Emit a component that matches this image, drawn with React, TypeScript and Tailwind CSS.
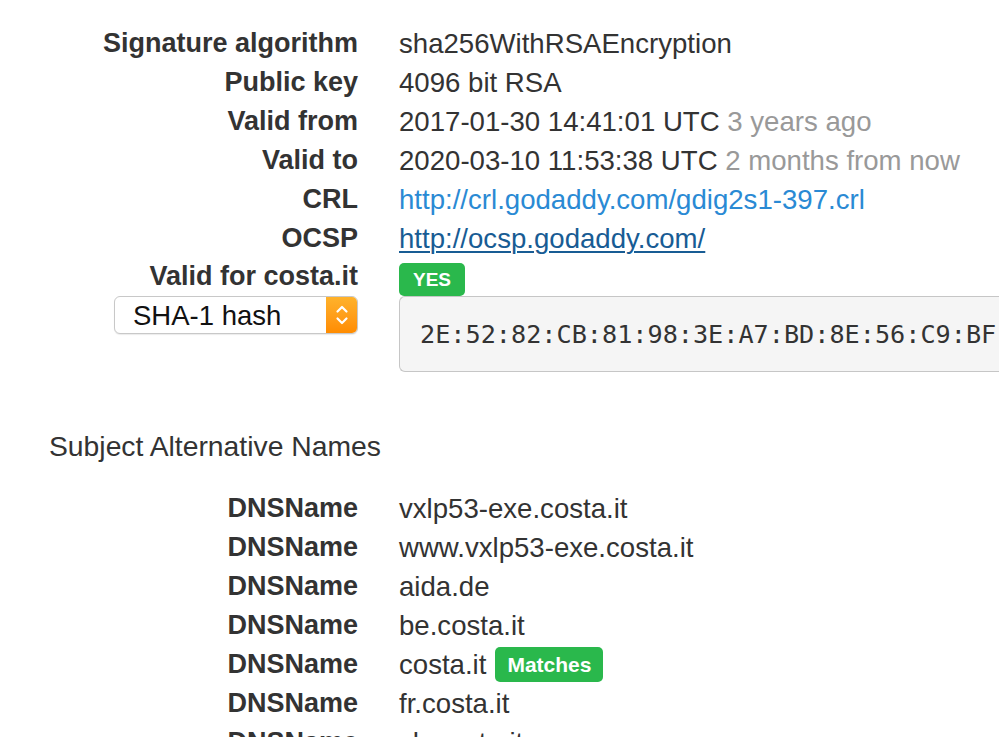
import React from "react";

const Label = ({ children }: { children: React.ReactNode }) => (
  <div className="w-[358px] shrink-0 text-right text-[27px] font-bold text-[#333]">{children}</div>
);

const Row = ({ label, children }: { label: React.ReactNode; children: React.ReactNode }) => (
  <div className="flex h-[39px] items-center">
    <Label>{label}</Label>
    <div className="ml-[41px] whitespace-nowrap text-[27.6px] text-[#333]">{children}</div>
  </div>
);

export default function App() {
  const dns = [
    "vxlp53-exe.costa.it",
    "www.vxlp53-exe.costa.it",
    "aida.de",
    "be.costa.it",
    "costa.it",
    "fr.costa.it",
    "ch.costa.it",
  ];
  return (
    <div
      className="h-[737px] w-[999px] overflow-hidden bg-white text-[27px] leading-[39px]"
      style={{ fontFamily: '"Liberation Sans", Arial, sans-serif' }}
    >
      <div className="pt-[24px]">
        <Row label="Signature algorithm">sha256WithRSAEncryption</Row>
        <Row label="Public key">4096 bit RSA</Row>
        <Row label="Valid from">
          2017-01-30 14:41:01 UTC <span className="text-[#999]">3 years ago</span>
        </Row>
        <Row label="Valid to">
          2020-03-10 11:53:38 UTC <span className="text-[#999]">2 months from now</span>
        </Row>
        <Row label="CRL">
          <span className="text-[#2a8ad4]">http://crl.godaddy.com/gdig2s1-397.crl</span>
        </Row>
        <Row label="OCSP">
          <span className="text-[#185c94] underline decoration-[1.5px] underline-offset-[3px]">
            http://ocsp.godaddy.com/
          </span>
        </Row>
        <div className="flex h-[38px] items-start">
          <Label>
            <div className="mt-[-1px]">Valid for costa.it</div>
          </Label>
          <div className="ml-[41px] mt-[5px] flex h-[33px] items-center rounded-[5px] bg-[#2ab84c] px-[14px] text-[19px] font-bold leading-none text-white">
            YES
          </div>
        </div>
        <div className="flex items-start">
          <div className="flex w-[358px] shrink-0 justify-end">
            <div className="flex h-[38px] w-[244px] overflow-hidden rounded-[6px] border border-[#c8c8c8] bg-white shadow-[0_1px_1px_rgba(0,0,0,0.08)]">
              <div className="flex flex-1 items-center pl-[18px] text-[27.5px] font-normal text-[#111]">
                SHA-1 hash
              </div>
              <div className="flex w-[31px] items-center justify-center bg-gradient-to-b from-[#ffb22a] to-[#ff8c00]">
                <svg width="14" height="24" viewBox="0 0 14 24" fill="none" stroke="white" strokeWidth="2.2" strokeLinecap="round" strokeLinejoin="round">
                  <path d="M2.5 8.5 L7 4 L11.5 8.5" />
                  <path d="M2.5 15.5 L7 20 L11.5 15.5" />
                </svg>
              </div>
            </div>
          </div>
          <div
            className="ml-[41px] flex h-[76px] flex-1 items-center overflow-hidden whitespace-nowrap rounded-l-[6px] border border-r-0 border-[#c6c6c6] bg-[#f5f5f5] pl-[20px] text-[25.2px] text-[#333]"
            style={{ fontFamily: '"DejaVu Sans Mono", monospace' }}
          >
            2E:52:82:CB:81:98:3E:A7:BD:8E:56:C9:BF
          </div>
        </div>

        <div className="mt-[55px] pl-[49px] text-[28.3px] text-[#333]">Subject Alternative Names</div>

        <div className="mt-[23px]">
          {dns.map((d) => (
            <Row key={d} label="DNSName">
              <span className="inline-flex items-center">
                {d}
                {d === "costa.it" && (
                  <span className="ml-[9px] inline-flex h-[35px] items-center rounded-[5px] bg-[#2ab84c] px-[12px] text-[21px] font-bold leading-none text-white">
                    Matches
                  </span>
                )}
              </span>
            </Row>
          ))}
        </div>
      </div>
    </div>
  );
}
